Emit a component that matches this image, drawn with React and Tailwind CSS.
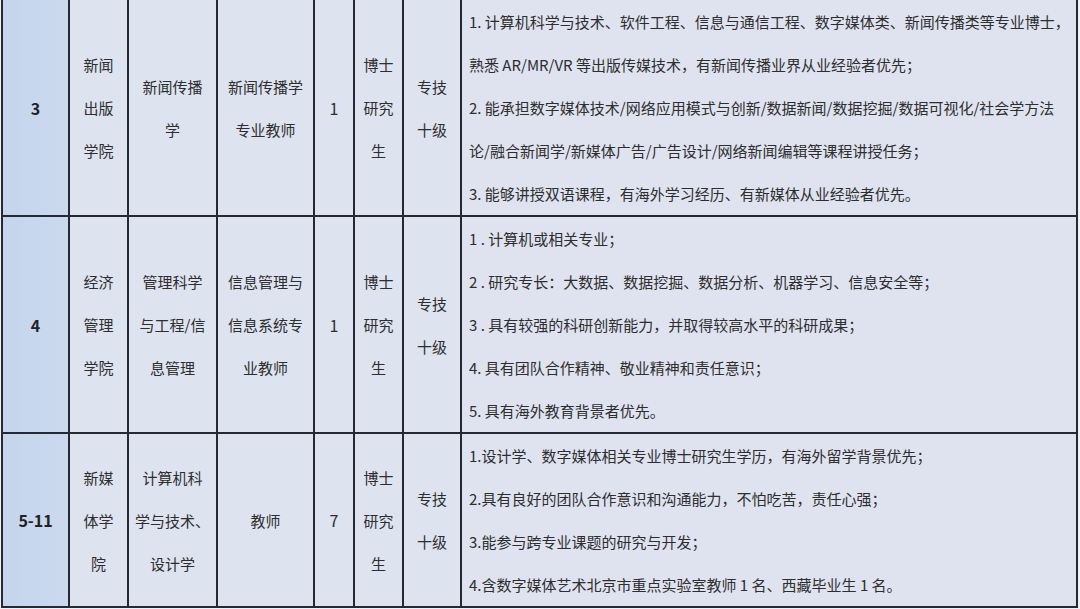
import React from "react";

const rows = [
  {
    no: "3",
    college: ["新闻", "出版", "学院"],
    major: ["新闻传播", "学"],
    post: ["新闻传播学", "专业教师"],
    count: "1",
    degree: ["博士", "研究", "生"],
    level: ["专技", "十级"],
    req: [
      "1. 计算机科学与技术、软件工程、信息与通信工程、数字媒体类、新闻传播类等专业博士，",
      "熟悉 AR/MR/VR 等出版传媒技术，有新闻传播业界从业经验者优先；",
      "2. 能承担数字媒体技术/网络应用模式与创新/数据新闻/数据挖掘/数据可视化/社会学方法",
      "论/融合新闻学/新媒体广告/广告设计/网络新闻编辑等课程讲授任务；",
      "3. 能够讲授双语课程，有海外学习经历、有新媒体从业经验者优先。",
    ],
  },
  {
    no: "4",
    college: ["经济", "管理", "学院"],
    major: ["管理科学", "与工程/信", "息管理"],
    post: ["信息管理与", "信息系统专", "业教师"],
    count: "1",
    degree: ["博士", "研究", "生"],
    level: ["专技", "十级"],
    req: [
      "1 . 计算机或相关专业；",
      "2 . 研究专长：大数据、数据挖掘、数据分析、机器学习、信息安全等；",
      "3 . 具有较强的科研创新能力，并取得较高水平的科研成果；",
      "4. 具有团队合作精神、敬业精神和责任意识；",
      "5. 具有海外教育背景者优先。",
    ],
  },
  {
    no: "5-11",
    college: ["新媒", "体学", "院"],
    major: ["计算机科", "学与技术、", "设计学"],
    post: ["教师"],
    count: "7",
    degree: ["博士", "研究", "生"],
    level: ["专技", "十级"],
    req: [
      "1.设计学、数字媒体相关专业博士研究生学历，有海外留学背景优先；",
      "2.具有良好的团队合作意识和沟通能力，不怕吃苦，责任心强；",
      "3.能参与跨专业课题的研究与开发；",
      "4.含数字媒体艺术北京市重点实验室教师 1 名、西藏毕业生 1 名。",
    ],
  },
];

const font = {
  fontFamily: '"Noto Sans CJK SC", "Noto Sans", sans-serif',
};

function Lines({ lines }) {
  return (
    <div className="flex h-full flex-col items-center justify-center bg-[#dde3ef] text-center">
      {lines.map((l, i) => (
        <div key={i} className="whitespace-nowrap leading-[43px]">
          {l}
        </div>
      ))}
    </div>
  );
}

export default function App() {
  return (
    <div
      className="h-[609px] w-[1080px] overflow-hidden bg-[#eef1f6] text-[15px] text-[#2e2e2e]"
      style={font}
    >
      <div className="ml-[1px] grid w-[1077px] grid-cols-[65px_57px_87px_95px_38px_47px_56px_614px] gap-[2px] bg-[#252a32] px-[2px] pb-[2px]">
        {rows.map((r, ri) => (
          <React.Fragment key={ri}>
            <div className="flex items-center justify-center bg-gradient-to-r from-[#c4d5ec] to-[#cbd9ee] text-[16px] font-bold text-[#222]">
              {r.no}
            </div>
            <Lines lines={r.college} />
            <Lines lines={r.major} />
            <Lines lines={r.post} />
            <div className="flex items-center justify-center bg-[#dde3ef] text-[16px]">
              {r.count}
            </div>
            <Lines lines={r.degree} />
            <Lines lines={r.level} />
            <div className="flex flex-col justify-center overflow-hidden bg-[#dee3ef] pl-[7px]">
              {r.req.map((l, i) => (
                <div key={i} className="whitespace-nowrap leading-[43px]">
                  {l}
                </div>
              ))}
            </div>
          </React.Fragment>
        ))}
      </div>
    </div>
  );
}
